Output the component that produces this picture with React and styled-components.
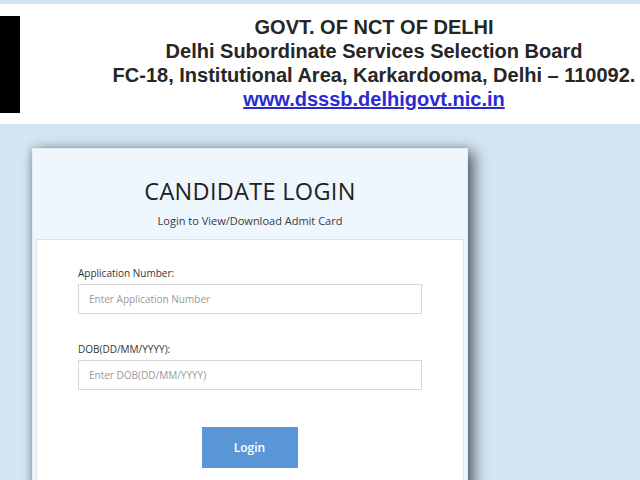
import React from 'react'
import styled, { createGlobalStyle } from 'styled-components'

const GlobalStyle = createGlobalStyle`
  html, body {
    margin: 0;
    padding: 0;
    background: #d4e6f2;
    overflow: hidden;
  }
  * { box-sizing: border-box; }
`

const Page = styled.div`
  width: 640px;
  height: 480px;
  background: #d4e6f2;
  padding-top: 4px;
  overflow: hidden;
`

const Banner = styled.header`
  height: 120px;
  background: #ffffff;
  display: flex;
  align-items: center;
`

const Logo = styled.div`
  width: 20px;
  height: 97px;
  background: #000;
  flex-shrink: 0;
`

const BannerText = styled.div`
  flex: 1;
  display: flex;
  flex-direction: column;
  align-items: center;
  padding: 0 0 2px 88px;
  font-family: 'Liberation Sans', Arial, sans-serif;
  font-weight: bold;
  font-size: 20px;
  line-height: 24px;
  color: #262626;
  white-space: nowrap;
`

const SiteLink = styled.a`
  color: #2a2ad0;
  text-decoration: underline;
`

const Main = styled.main`
  padding: 24px 0 0 32px;
`

const Card = styled.section`
  width: 436px;
  height: 400px;
  background: #eef6fe;
  border: 1px solid #e4ecf2;
  box-shadow: 6px 4px 14px rgba(40, 50, 60, 0.75), -2px 0 6px rgba(60, 80, 100, 0.25);
  display: flex;
  flex-direction: column;
  font-family: 'Open Sans', sans-serif;
`

const CardHead = styled.div`
  height: 90px;
  display: flex;
  flex-direction: column;
  align-items: center;
  padding-top: 27px;
`

const Title = styled.h1`
  margin: 0;
  font-size: 23.5px;
  font-weight: 400;
  letter-spacing: 0.3px;
  color: #222;
  line-height: 30px;
`

const Subtitle = styled.p`
  margin: 7px 0 0;
  font-size: 11px;
  color: #3a3a3a;
`

const Body = styled.div`
  flex: 1;
  margin: 0 3px;
  background: #fff;
  border: 1px solid #e2e2e2;
  padding: 26px 42px 0 41px;
  display: flex;
  flex-direction: column;
`

const Field = styled.div`
  display: flex;
  flex-direction: column;
  margin-bottom: ${p => p.$gap}px;
`

const Label = styled.label`
  font-size: 10px;
  color: #333;
  margin-bottom: 4px;
`

const Input = styled.input`
  width: 344px;
  height: 30px;
  border: 1px solid #d6d6d6;
  padding: 0 10px;
  font-family: 'Open Sans', sans-serif;
  font-size: 10px;
  color: #333;
  outline: none;
  &::placeholder { color: #999; }
`

const Button = styled.button`
  align-self: center;
  width: 96px;
  height: 41px;
  border: none;
  background: #5b97d6;
  color: #fff;
  font-family: 'Open Sans', sans-serif;
  font-weight: 600;
  font-size: 12px;
`

export default function App() {
  return (
    <Page>
      <GlobalStyle />
      <Banner>
        <Logo />
        <BannerText>
          <span>GOVT. OF NCT OF DELHI</span>
          <span>Delhi Subordinate Services Selection Board</span>
          <span>FC-18, Institutional Area, Karkardooma, Delhi – 110092.</span>
          <SiteLink href="#">www.dsssb.delhigovt.nic.in</SiteLink>
        </BannerText>
      </Banner>
      <Main>
        <Card>
          <CardHead>
            <Title>CANDIDATE LOGIN</Title>
            <Subtitle>Login to View/Download Admit Card</Subtitle>
          </CardHead>
          <Body>
            <Field $gap={28}>
              <Label>Application Number:</Label>
              <Input placeholder="Enter Application Number" />
            </Field>
            <Field $gap={37}>
              <Label>DOB(DD/MM/YYYY):</Label>
              <Input placeholder="Enter DOB(DD/MM/YYYY)" />
            </Field>
            <Button>Login</Button>
          </Body>
        </Card>
      </Main>
    </Page>
  )
}
